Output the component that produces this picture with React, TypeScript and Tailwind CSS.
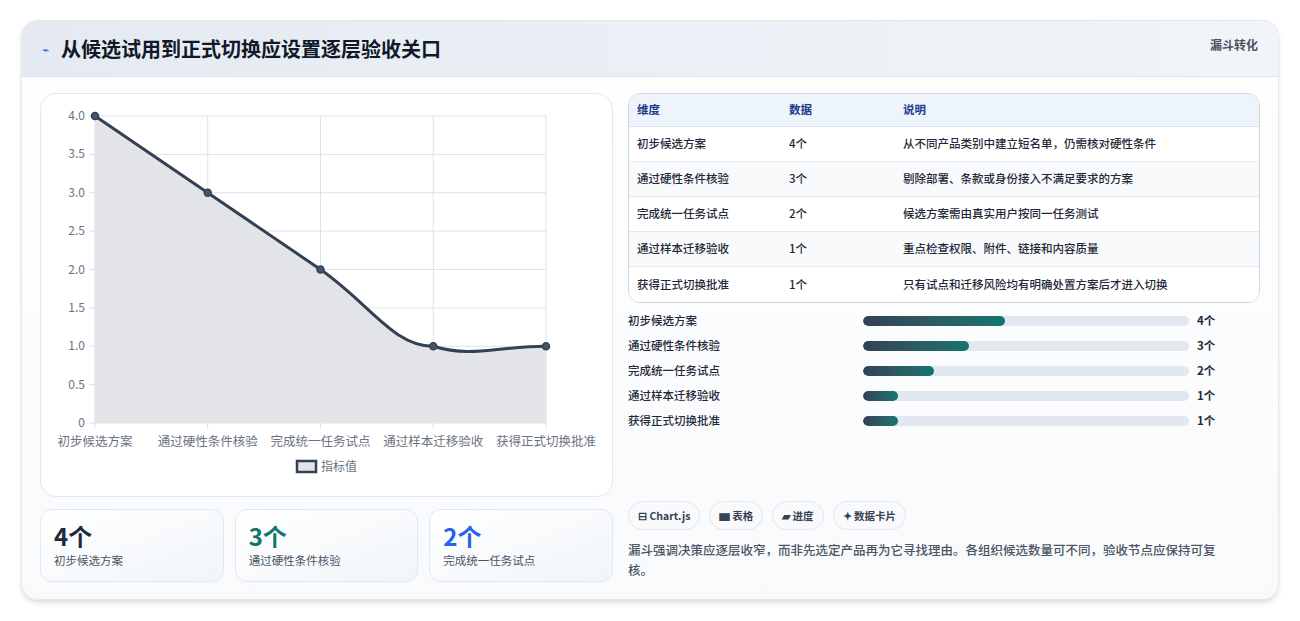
import React from "react";

const rows = [
  { name: "初步候选方案", v: 4, note: "从不同产品类别中建立短名单，仍需核对硬性条件", w: "43.5%" },
  { name: "通过硬性条件核验", v: 3, note: "剔除部署、条款或身份接入不满足要求的方案", w: "32.5%" },
  { name: "完成统一任务试点", v: 2, note: "候选方案需由真实用户按同一任务测试", w: "21.7%" },
  { name: "通过样本迁移验收", v: 1, note: "重点检查权限、附件、链接和内容质量", w: "10.8%" },
  { name: "获得正式切换批准", v: 1, note: "只有试点和迁移风险均有明确处置方案后才进入切换", w: "10.8%" },
];

const Chart = () => {
  const x0 = 54, x1 = 505, yTop = 22, yBot = 329;
  const xs = [0, 1, 2, 3, 4].map((i) => x0 + ((x1 - x0) / 4) * i);
  const y = (v: number) => yBot - ((yBot - yTop) * v) / 4;
  const ticks = [0, 0.5, 1, 1.5, 2, 2.5, 3, 3.5, 4];
  const pts = rows.map((r, i) => [xs[i], y(r.v)]);
  const line = `M${pts[0][0]},${pts[0][1]} L${pts[1][0]},${pts[1][1]} L${pts[2][0]},${pts[2][1]} C${pts[2][0] + 50},${pts[2][1] + 35} ${pts[3][0] - 40},${pts[3][1]} ${pts[3][0]},${pts[3][1]} C${pts[3][0] + 40},${pts[3][1] + 12} ${pts[4][0] - 50},${pts[4][1]} ${pts[4][0]},${pts[4][1]}`;
  return (
    <svg width="572" height="400" className="block">
      {ticks.map((t) => (
        <g key={t}>
          <line x1={x0 - 6} x2={x1} y1={y(t)} y2={y(t)} stroke="#dde1ea" />
          <text x={x0 - 10} y={y(t) + 4} textAnchor="end" fontSize="12" fill="#6b7280">{t === 0 ? "0" : t.toFixed(1)}</text>
        </g>
      ))}
      {xs.map((x, i) => (
        <g key={i}>
          <line x1={x} x2={x} y1={yTop} y2={yBot + 6} stroke="#dde1ea" />
          <text x={x} y={yBot + 23} textAnchor="middle" fontSize="12.5" fill="#6b7280">{rows[i].name}</text>
        </g>
      ))}
      <path d={`${line} L${x1},${yBot} L${x0},${yBot} Z`} fill="#e3e4e7" />
      <path d={line} fill="none" stroke="#334155" strokeWidth="3" />
      {pts.map(([px, py], i) => (
        <circle key={i} cx={px} cy={py} r="3.5" fill="#475569" stroke="#334155" strokeWidth="1.5" />
      ))}
      <rect x="256" y="367" width="19" height="11" fill="#e3e4e7" stroke="#334155" strokeWidth="2.5" />
      <text x="280" y="377" fontSize="12" fill="#6b7280">指标值</text>
    </svg>
  );
};

export default function App() {
  return (
    <div className="w-[1300px] h-[621px] bg-white pt-[20px] px-[21px]" style={{ fontFamily: '"Noto Sans CJK SC", "Noto Sans", sans-serif' }}>
      <div className="h-[580px] rounded-2xl border border-gray-200 shadow-md bg-gradient-to-b from-white to-[#f8fafc] overflow-hidden">
        <div className="h-[56px] flex items-center justify-between pl-[20px] pr-[20px] bg-gradient-to-r from-[#e5eaf2] to-[#f1f5f9] border-b border-[#dbe3ee]">
          <div className="flex items-center gap-3">
            <span className="text-[#2563eb] text-xs">⌁</span>
            <h1 className="text-[20px] font-bold text-[#111827]">从候选试用到正式切换应设置逐层验收关口</h1>
          </div>
          <span className="text-[12px] font-semibold text-[#4b5563] self-start mt-[15px]">漏斗转化</span>
        </div>
        <div className="flex gap-[15px] px-[18px] pt-[16px]">
          <div className="w-[573px] flex flex-col gap-[12px]">
            <div className="h-[404px] rounded-2xl border border-[#e2e8f0] bg-white overflow-hidden">
              <Chart />
            </div>
            <div className="grid grid-cols-3 gap-[11px]">
              {[
                ["4个", "text-[#1e293b]", "初步候选方案"],
                ["3个", "text-[#0f766e]", "通过硬性条件核验"],
                ["2个", "text-[#2563eb]", "完成统一任务试点"],
              ].map(([v, c, l]) => (
                <div key={l} className="h-[73px] rounded-xl border border-[#e2e8f0] bg-gradient-to-br from-white to-[#f1f5f9] px-[13px] pt-[10px]">
                  <div className={`text-[24px] font-bold leading-[32px] ${c}`}>{v}</div>
                  <div className="text-[11.5px] text-[#4b5563]">{l}</div>
                </div>
              ))}
            </div>
          </div>
          <div className="w-[634px] flex flex-col">
            <div className="rounded-xl border border-[#cfd8e3] overflow-hidden bg-white">
              <div className="flex h-[33px] items-center bg-[#eef4fc] border-b border-[#dbe3ee] text-[11.5px] font-semibold text-[#1e3a8a]">
                <span className="w-[160px] pl-[8px]">维度</span>
                <span className="w-[114px]">数据</span>
                <span>说明</span>
              </div>
              {rows.map((r, i) => (
                <div key={r.name} className={`flex h-[35px] items-center text-[11.5px] font-medium text-[#1f2937] ${i < 4 ? "border-b border-[#e5e9f0]" : ""} ${i % 2 ? "bg-[#f8fafc]" : "bg-white"}`}>
                  <span className="w-[160px] pl-[8px]">{r.name}</span>
                  <span className="w-[114px]">{r.v}个</span>
                  <span>{r.note}</span>
                </div>
              ))}
            </div>
            <div className="flex flex-col gap-[7px] mt-[9px]">
              {rows.map((r) => (
                <div key={r.name} className="flex items-center h-[18px] text-[11.5px] font-medium text-[#1f2937]">
                  <span className="w-[235px]">{r.name}</span>
                  <div className="w-[326px] h-[10px] rounded-full bg-[#e2e8f0] overflow-hidden">
                    <div className="h-full rounded-full bg-gradient-to-r from-[#334155] to-[#0f766e]" style={{ width: r.w }} />
                  </div>
                  <span className="ml-[8px] font-semibold">{r.v}个</span>
                </div>
              ))}
            </div>
            <div className="flex gap-[9px] mt-[71px]">
              {["⊟ Chart.js", "▆ 表格", "▰ 进度", "✦ 数据卡片"].map((t) => (
                <span key={t} className="h-[29px] px-[9px] flex items-center rounded-full border border-[#e2e8f0] bg-[#f8fafc] text-[10.5px] font-semibold text-[#374151]">{t}</span>
              ))}
            </div>
            <p className="mt-[10px] text-[12.5px] leading-[20px] font-medium text-[#4b5563] pr-[20px]">
              漏斗强调决策应逐层收窄，而非先选定产品再为它寻找理由。各组织候选数量可不同，验收节点应保持可复核。
            </p>
          </div>
        </div>
      </div>
    </div>
  );
}
